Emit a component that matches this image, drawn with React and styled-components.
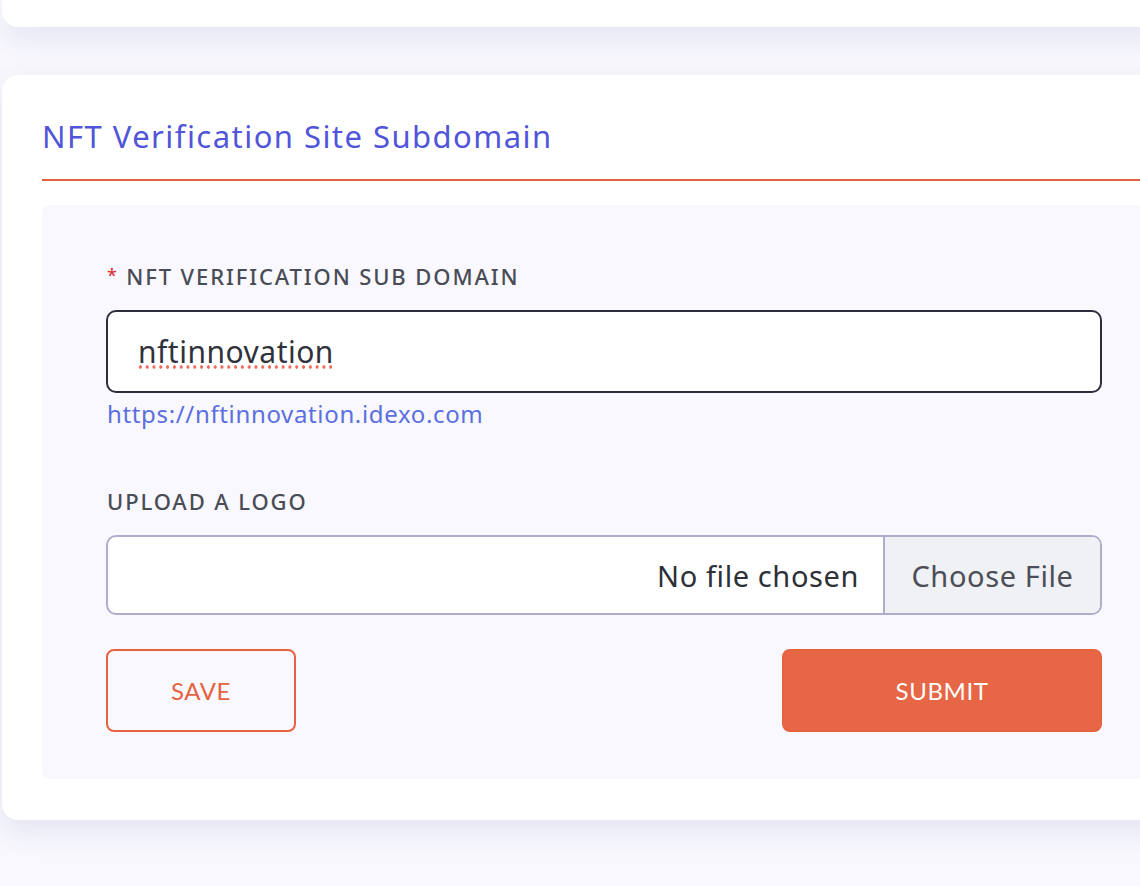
import styled, { createGlobalStyle } from "styled-components";

const GlobalStyle = createGlobalStyle`
  html, body {
    margin: 0;
    padding: 0;
    background: #f8f8fd;
    overflow: hidden;
  }
  body {
    font-family: "Noto Sans", "Open Sans", sans-serif;
  }
`;

export default function App() {
  return (
    <>
      <GlobalStyle />
      <Page>
        <TopCard />
        <Card>
          <Title>NFT Verification Site Subdomain</Title>
          <Panel>
            <Field gap={51}>
              <Label required>NFT VERIFICATION SUB DOMAIN</Label>
              <InputWrap>
                <TextInput defaultValue="nftinnovation" spellCheck={false} />
                <SpellMark />
              </InputWrap>
              <Helper>https://nftinnovation.idexo.com</Helper>
            </Field>
            <Field gap={34}>
              <Label>UPLOAD A LOGO</Label>
              <FileBox>
                <FileName>No file chosen</FileName>
                <FileButton>Choose File</FileButton>
              </FileBox>
            </Field>
            <Actions>
              <Button variant="outline">SAVE</Button>
              <Button variant="solid">SUBMIT</Button>
            </Actions>
          </Panel>
        </Card>
      </Page>
    </>
  );
}

const Page = styled.div`
  width: 1140px;
  height: 886px;
  padding-left: 2px;
  box-sizing: border-box;
  display: flex;
  flex-direction: column;
  gap: 48px;
`;

const TopCard = styled.div`
  width: 1200px;
  height: 27px;
  background: #ffffff;
  border-radius: 0 0 16px 16px;
  box-shadow: 0 10px 30px rgba(70, 70, 170, 0.12);
`;

const Card = styled.div`
  width: 1200px;
  height: 745px;
  background: #ffffff;
  border-radius: 16px 0 0 16px;
  box-shadow: 0 10px 30px rgba(70, 70, 170, 0.12);
  padding: 40px 0 41px 40px;
  box-sizing: border-box;
  display: flex;
  flex-direction: column;
`;

const Title = styled.h2`
  margin: 0;
  font-family: "Noto Sans", sans-serif;
  font-weight: 400;
  font-size: 31px;
  line-height: 42px;
  color: #5155d9;
  letter-spacing: 1.45px;
  padding-bottom: 22px;
  border-bottom: 2px solid #e5603f;
`;

const Panel = styled.div`
  margin-top: 24px;
  flex: 1;
  background: #f8f8fe;
  border-radius: 8px 0 0 8px;
  padding: 52px 0 0 64px;
  box-sizing: border-box;
  width: 1160px;
`;

const Field = styled.div`
  width: 996px;
  display: flex;
  flex-direction: column;
  margin-bottom: ${({ gap }) => gap}px;
`;

const Label = styled.label`
  font-family: "Noto Sans", sans-serif;
  font-size: 22px;
  font-weight: 500;
  color: #494c55;
  letter-spacing: 1.9px;
  line-height: 36px;
  margin-bottom: 16px;
  padding-left: 1px;
  &::before {
    content: ${({ required }) => (required ? '"*\\00a0\\00a0"' : '""')};
    color: #d9343a;
    font-size: 18px;
    vertical-align: 3px;
    letter-spacing: 0;
  }
`;

const InputWrap = styled.div`
  position: relative;
  display: flex;
  flex-direction: column;
`;

const TextInput = styled.input`
  height: 83px;
  box-sizing: border-box;
  border: 2px solid #2c2e3c;
  border-radius: 10px;
  background: #ffffff;
  padding: 0 30px;
  font-family: "Noto Sans", sans-serif;
  font-size: 30px;
  letter-spacing: 0.5px;
  color: #2f323a;
  outline: none;
`;

const SpellMark = styled.span`
  position: absolute;
  left: 31px;
  top: 55px;
  width: 195px;
  height: 4px;
  background-image: radial-gradient(circle, #ef6b5d 1.5px, transparent 1.9px);
  background-size: 6.8px 4px;
  pointer-events: none;
`;

const Helper = styled.span`
  margin-top: 4px;
  padding-left: 1px;
  font-family: "Noto Sans", sans-serif;
  font-size: 24px;
  line-height: 34px;
  color: #5b6fe0;
  letter-spacing: 0.65px;
`;

const FileBox = styled.div`
  height: 80px;
  box-sizing: border-box;
  border: 2px solid #b0adcc;
  border-radius: 10px;
  background: #ffffff;
  display: flex;
  align-items: stretch;
  overflow: hidden;
  font-family: "Noto Sans", sans-serif;
  font-size: 29px;
  letter-spacing: 0.6px;
`;

const FileName = styled.span`
  flex: 1;
  display: flex;
  align-items: center;
  justify-content: flex-end;
  padding-right: 24px;
  color: #2e3038;
`;

const FileButton = styled.span`
  width: 215px;
  display: flex;
  align-items: center;
  justify-content: center;
  background: #f0f1f5;
  border-left: 2px solid #b0adcc;
  color: #4b4e56;
`;

const Actions = styled.div`
  width: 996px;
  display: flex;
  justify-content: space-between;
`;

const Button = styled.button`
  height: 83px;
  width: ${({ variant }) => (variant === "solid" ? "320px" : "190px")};
  border-radius: 8px;
  border: 2px solid #e5633f;
  background: ${({ variant }) => (variant === "solid" ? "#e66645" : "transparent")};
  color: ${({ variant }) => (variant === "solid" ? "#ffffff" : "#e5633f")};
  font-family: "Lato", sans-serif;
  font-weight: 400;
  font-size: 24px;
  letter-spacing: 0.6px;
  cursor: pointer;
`;
